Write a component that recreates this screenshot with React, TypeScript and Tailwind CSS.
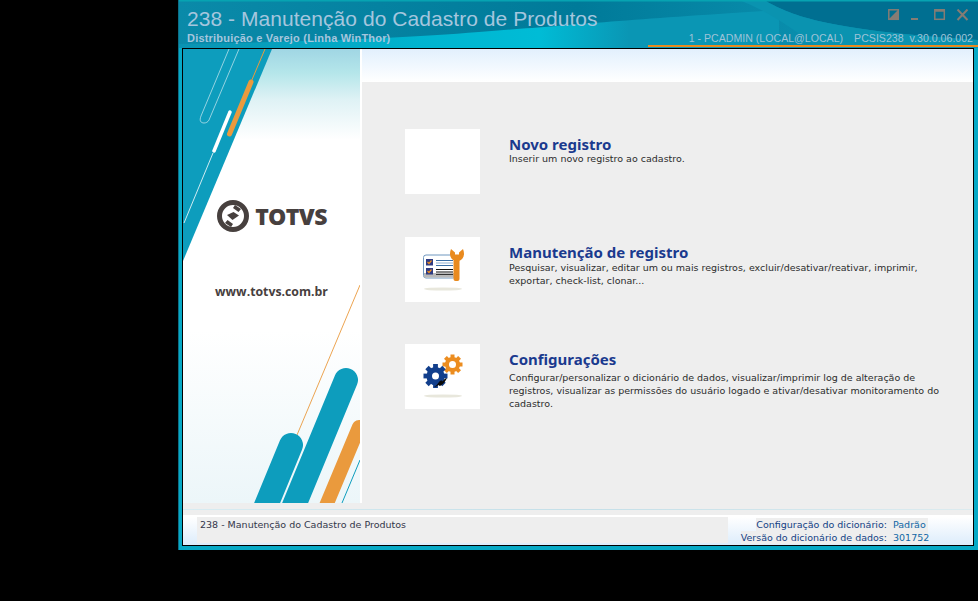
const body = "[font-family:'DejaVu_Sans',sans-serif]";

function Gear({ cx, cy, r, hole, teeth, color }: { cx: number; cy: number; r: number; hole: number; teeth: number; color: string }) {
  const list = Array.from({ length: teeth }, (_, i) => (i * 360) / teeth);
  return (
    <g>
      {list.map((a) => (
        <rect key={a} x={cx - r * 0.2} y={cy - r} width={r * 0.4} height={r * 0.5} fill={color} transform={`rotate(${a} ${cx} ${cy})`} />
      ))}
      <circle cx={cx} cy={cy} r={r * 0.76} fill={color} />
      <circle cx={cx} cy={cy} r={hole} fill="#fff" />
    </g>
  );
}

function IconMaintenance() {
  return (
    <svg viewBox="0 0 75 65" className="w-[75px] h-[65px]">
      <ellipse cx="38" cy="52" rx="19" ry="1.600" fill="#e8e7dc" />
      <rect x="18.500" y="18" width="32" height="23" rx="2.500" fill="#fff" stroke="#6f97bf" strokeWidth="1" />
      <rect x="19" y="36" width="31" height="4.500" fill="#b9b9b9" />
      <rect x="21" y="22" width="7" height="6.500" fill="#2e3b82" />
      <rect x="21" y="31" width="7" height="6.500" fill="#2e3b82" />
      <path d="M22.500 25l1.500 1.500 2.500-3M22.500 34l1.500 1.500 2.500-3" fill="none" stroke="#ef8f22" strokeWidth="1.200" />
      <rect x="31" y="23" width="17" height="1" fill="#3a6ea5" />
      <rect x="31" y="25.500" width="17" height="1" fill="#8fb0d0" />
      <rect x="31" y="28" width="17" height="1" fill="#3a6ea5" />
      <rect x="31" y="32" width="17" height="1" fill="#111" />
      <rect x="31" y="34.500" width="17" height="1" fill="#111" />
      <rect x="31" y="37" width="17" height="1" fill="#333" />
      <rect x="48.500" y="22" width="6" height="22" rx="2" fill="#e98a1e" />
      <path d="M46 12C43.500 18 46 23 50 24h4C58 23 60.500 18 58 12L54 15.500V17.500H50V15.500z" fill="#e98a1e" />
    </svg>
  );
}

function IconSettings() {
  return (
    <svg viewBox="0 0 75 65" className="w-[75px] h-[65px]">
      <ellipse cx="38" cy="52" rx="19" ry="1.600" fill="#e8e7dc" />
      <Gear cx={47.500} cy={20.500} r={10} hole={3.500} teeth={8} color="#ec8d20" />
      <Gear cx={30.500} cy={32} r={12} hole={3.500} teeth={8} color="#123f8c" />
      <path d="M29 43c2-1 3.500-3 5-5 1.500-1.500 3-2 3.500-.5 1-2 2.500-3 4.500-3.500-1.500 3-3.500 6-6 7.500-1 .5-2 .5-2.500-.5-1.500 1-3 2-4.500 2z" fill="#0a0a0a" />
    </svg>
  );
}

function SidebarArt() {
  return (
    <svg viewBox="0 0 177 454" className="absolute inset-0 w-[177px] h-[454px]">
      <defs>
        <linearGradient id="side" x1="0" y1="0" x2="0" y2="1">
          <stop offset="0" stopColor="#a0d6e4" />
          <stop offset="0.053" stopColor="#b5e6ea" />
          <stop offset="0.112" stopColor="#dff2f5" />
          <stop offset="0.2" stopColor="#ffffff" />
          <stop offset="0.62" stopColor="#ffffff" />
          <stop offset="1" stopColor="#ecf6f9" />
        </linearGradient>
      </defs>
      <rect width="177" height="454" fill="url(#side)" />
      <polygon points="0,0 89,0 0,212" fill="#0d9dbd" />
      <path d="M46 0L18 67c-2 5 0 7 3 7 2 0 4-1 5-3L56 0" fill="none" stroke="#cfeaf1" strokeWidth="0.700" />
      <line x1="68" y1="33" x2="46.500" y2="85" stroke="#ea9a3d" strokeWidth="5" strokeLinecap="round" />
      <line x1="68" y1="33" x2="82" y2="0" stroke="#ea9a3d" strokeWidth="1" />
      <line x1="47" y1="63" x2="31" y2="102" stroke="#fff" strokeWidth="3.500" strokeLinecap="round" />
      <line x1="30" y1="104" x2="1" y2="174" stroke="#fff" strokeWidth="0.800" />
      <line x1="177" y1="236" x2="114" y2="386" stroke="#ea9a3d" strokeWidth="0.900" />
      <line x1="108" y1="396" x2="80" y2="464" stroke="#0d9dbd" strokeWidth="24" strokeLinecap="round" />
      <line x1="163" y1="331" x2="108" y2="464" stroke="#0d9dbd" strokeWidth="24" strokeLinecap="round" />
      <line x1="176" y1="378" x2="140" y2="464" stroke="#ea9a3d" strokeWidth="14" strokeLinecap="round" />
      <line x1="177" y1="411" x2="159" y2="454" stroke="#0d9dbd" strokeWidth="1" />
    </svg>
  );
}

function TitleArt() {
  return (
    <svg viewBox="0 0 800 48" preserveAspectRatio="none" className="absolute inset-0 w-[800px] h-[48px]">
      <defs>
        <linearGradient id="band" x1="0" y1="0" x2="1" y2="0">
          <stop offset="0" stopColor="#0a93b2" />
          <stop offset="0.4" stopColor="#00b4cf" />
          <stop offset="0.6" stopColor="#00bcd6" />
          <stop offset="0.75" stopColor="#0a96b4" />
        </linearGradient>
        <linearGradient id="top" x1="0" y1="0" x2="1" y2="0">
          <stop offset="0" stopColor="#0a8aa9" />
          <stop offset="0.5" stopColor="#007a99" />
          <stop offset="0.8" stopColor="#0a8fae" />
        </linearGradient>
      </defs>
      <rect width="800" height="48" fill="url(#top)" />
      <path d="M0 48V44C120 42 230 38 300 32 380 26 440 20 600 10V48z" fill="url(#band)" />
      <path d="M585 0C610 14 640 30 800 40V0z" fill="#006f91" />
      <path d="M560 0C590 12 610 26 640 48H800V40C640 30 610 14 585 0z" fill="#0a93b0" />
      <rect width="800" height="1.500" fill="#07a3b2" />
    </svg>
  );
}

function WindowButtons() {
  return (
    <svg viewBox="0 0 81 13" className="w-[81px] h-[13px]">
      <g fill="none" stroke="#857c74" strokeWidth="1.500">
        <rect x="0.800" y="0.800" width="9.500" height="9.500" />
        <rect x="46.800" y="0.800" width="9.500" height="9.500" />
        <path d="M47 1.500h9" strokeWidth="2.500" />
        <path d="M69.500 0.500l10 10.500M79.500 0.500l-10 10.500" strokeWidth="2" />
      </g>
      <path d="M1 10L10 1V10z" fill="#857c74" />
      <rect x="23" y="9" width="7" height="2" fill="#857c74" />
    </svg>
  );
}

function OptionRow({ icon, title, lines, descClass }: { icon?: React.ReactNode; title: string; lines: string[]; descClass: string }) {
  return (
    <div className="flex gap-[29px]">
      <div className="w-[75px] h-[65px] bg-white shrink-0">{icon}</div>
      <div className="pt-[5px]">
        <h2 className="text-[#1a3a8e] text-[15px] leading-[20px] font-bold [font-family:'Noto_Sans',sans-serif]">{title}</h2>
        <p className={`text-[#2c2c2c] text-[9.500px] leading-[13px] whitespace-nowrap ${body} ${descClass}`}>
          {lines.map((l) => (
            <span key={l} className="block">{l}</span>
          ))}
        </p>
      </div>
    </div>
  );
}

export default function App() {
  return (
    <div className="h-[601px] w-[978px] bg-black pl-[178px] overflow-hidden">
      <div className="w-[800px] h-[550px] bg-[#07a9c6] border-l border-[#0b6f86]">
        <div className="relative h-[48px]">
          <TitleArt />
          <div className="relative flex justify-between h-full [font-family:'Liberation_Sans',sans-serif]">
            <div className="pl-[8px] pt-[7px]">
              <h1 className="text-[#a5c6de] text-[21px] leading-[24px] tracking-[0.05px]">238 - Manutenção do Cadastro de Produtos</h1>
              <p className="text-[#a5c6de] text-[11px] leading-[12px] font-bold tracking-[0.2px] mt-[1px]">Distribuição e Varejo (Linha WinThor)</p>
            </div>
            <div className="flex flex-col items-end pt-[9px]">
              <div className="pr-[9px]"><WindowButtons /></div>
              <p className="flex text-[#9fc3d8] text-[10.600px] leading-[13px] mt-[10px] whitespace-pre pr-[5px]">
                <span>1 - PCADMIN (LOCAL@LOCAL)</span>
                <span className="ml-[11px]">PCSIS238</span>
                <span className="ml-[6px]">v.30.0.06.002</span>
              </p>
              <div className="w-[330px] h-[2px] bg-[#ea8a1e]" />
            </div>
          </div>
        </div>

        <div className="ml-[3px] w-[792px] h-[498px] border border-black bg-[#eeeeee] flex flex-col">
          <div className="flex h-[454px]">
            <aside className="relative w-[179px] h-[454px] border-r-2 border-white shrink-0 flex flex-col items-center">
              <SidebarArt />
              <div className="relative flex items-center gap-[6px] mt-[151px] ml-[1px]">
                <svg viewBox="0 0 32 32" className="w-[32px] h-[32px]">
                  <circle cx="16" cy="16" r="13.500" fill="none" stroke="#47403e" strokeWidth="5" />
                  <path d="M7.500 13.500L16.500 9l8 4v5l-9 5-8-4.500z" fill="#fff" />
                  <path d="M10 15L16.500 12l5.500 3.500-6.500 4.500z" fill="#47403e" />
                  <path d="M18 5l6 4-2.500 3-5.500-4zM14 27l-6-4 2.500-3 5.500 4z" fill="#47403e" />
                </svg>
                <span className="text-[#47403e] text-[23px] leading-[30px] font-extrabold [font-family:'Open_Sans',sans-serif] tracking-[-0.6px]">TOTVS</span>
              </div>
              <p className="relative mt-[52px] text-[#47403e] text-[12.300px] leading-[16px] font-bold [font-family:'Open_Sans',sans-serif]">www.totvs.com.br</p>
            </aside>
            <main className="flex-1 flex flex-col">
              <div className="h-[33px] bg-gradient-to-b from-[#e2f0fd] to-white" />
              <div className="flex-1 pl-[43px] pt-[47px] flex flex-col">
                <OptionRow descClass="-mt-[2px]" title="Novo registro" lines={['Inserir um novo registro ao cadastro.']} />
                <div className="mt-[43px]">
                  <OptionRow
                    descClass="-mt-px"
                    icon={<IconMaintenance />}
                    title="Manutenção de registro"
                    lines={['Pesquisar, visualizar, editar um ou mais registros, excluir/desativar/reativar, imprimir,', 'exportar, check-list,  clonar...']}
                  />
                </div>
                <div className="mt-[42px]">
                  <OptionRow
                    descClass="mt-[2px]"
                    icon={<IconSettings />}
                    title="Configurações"
                    lines={[
                      'Configurar/personalizar o dicionário de dados, visualizar/imprimir log de alteração de',
                      'registros, visualizar as permissões do usuário logado e ativar/desativar monitoramento do',
                      'cadastro.',
                    ]}
                  />
                </div>
              </div>
            </main>
          </div>
          <div className="h-[6px] shrink-0" />
          <div className="h-px shrink-0 bg-gradient-to-r from-[#d8ecf2] via-[#c4dfe8] to-[#dcebef]" />
          <div className="h-[5px] shrink-0" />
          <div className="h-[2px] shrink-0 bg-white" />
          <footer className={`flex-1 flex bg-gradient-to-b from-white to-[#dcecfb] text-[9.500px] leading-[13px] ${body}`}>
            <div className="w-[14px] shrink-0" />
            <div className="w-[531px] h-[26px] bg-[#eeeeee] shrink-0 pl-[3px] pt-px text-[#33364a]">238 - Manutenção do Cadastro de Produtos</div>
            <div className="flex-1 pt-px">
              <div className="flex justify-end pr-[45px]">
                <span className="bg-[#eeeeee] text-[#123f85] pr-[2px]">Configuração do dicionário:</span>
                <span className="bg-[#eeeeee] text-[#0f66a5] pl-[4px] w-[39px]">Padrão</span>
              </div>
              <div className="flex justify-end pr-[45px]">
                <span className="bg-[#eeeeee] text-[#123f85] pr-[2px]">Versão do dicionário de dados:</span>
                <span className="bg-[#eeeeee] text-[#0f66a5] pl-[4px] w-[39px]">301752</span>
              </div>
            </div>
          </footer>
        </div>
      </div>
    </div>
  );
}
